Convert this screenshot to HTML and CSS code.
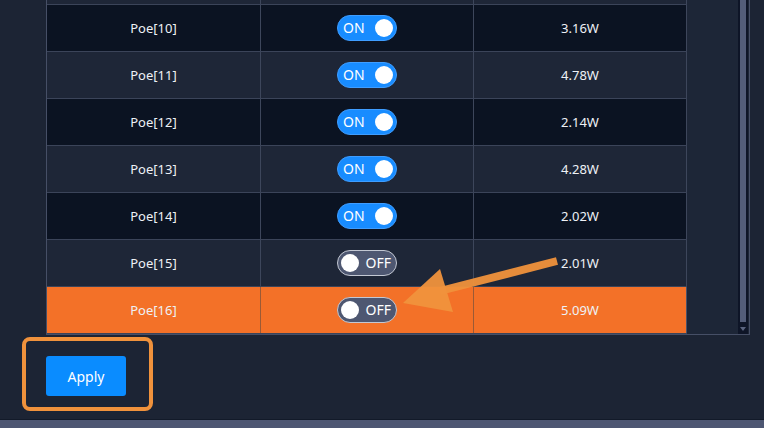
FILE: index.html
```html
<!DOCTYPE html>
<html>
<head>
<meta charset="utf-8">
<link rel="stylesheet" href="styles.css">
</head>
<body>
<div class="page">
  <div class="listbox">
    <div class="table">
      <div class="row light"><div class="cell">Poe[9]</div><div class="cell"><span class="tog on"><span class="lbl">ON</span><span class="knob"></span></span></div><div class="cell">3.10W</div></div>
      <div class="row dark"><div class="cell">Poe[10]</div><div class="cell"><span class="tog on"><span class="lbl">ON</span><span class="knob"></span></span></div><div class="cell">3.16W</div></div>
      <div class="row light"><div class="cell">Poe[11]</div><div class="cell"><span class="tog on"><span class="lbl">ON</span><span class="knob"></span></span></div><div class="cell">4.78W</div></div>
      <div class="row dark"><div class="cell">Poe[12]</div><div class="cell"><span class="tog on"><span class="lbl">ON</span><span class="knob"></span></span></div><div class="cell">2.14W</div></div>
      <div class="row light"><div class="cell">Poe[13]</div><div class="cell"><span class="tog on"><span class="lbl">ON</span><span class="knob"></span></span></div><div class="cell">4.28W</div></div>
      <div class="row dark"><div class="cell">Poe[14]</div><div class="cell"><span class="tog on"><span class="lbl">ON</span><span class="knob"></span></span></div><div class="cell">2.02W</div></div>
      <div class="row light"><div class="cell">Poe[15]</div><div class="cell"><span class="tog off"><span class="knob"></span><span class="lbl">OFF</span></span></div><div class="cell">2.01W</div></div>
      <div class="row hl"><div class="cell">Poe[16]</div><div class="cell"><span class="tog off"><span class="knob"></span><span class="lbl">OFF</span></span></div><div class="cell">5.09W</div></div>
    </div>
    <div class="spacer"></div>
    <div class="scrollbar"><div class="thumb"></div><div class="arrow"></div></div>
  </div>
  <div class="footer">
    <button class="apply">Apply</button>
    <div class="highlight"></div>
  </div>
  <div class="bottombar"></div>
  <svg class="annot" width="764" height="428" viewBox="0 0 764 428">
    <line x1="557" y1="261" x2="440" y2="291" stroke="#f0923c" stroke-width="8" stroke-linecap="butt" opacity="0.95"/>
    <polygon points="403,303 440,269 453,312" fill="#f0923c" opacity="0.95"/>
  </svg>
</div>
</body>
</html>
```
FILE: styles.css
```css
html, body {
  margin: 0;
  padding: 0;
  background: #1c2434;
  overflow: hidden;
}
.page {
  position: relative;
  width: 764px;
  height: 428px;
  overflow: hidden;
  font-family: "Noto Sans", "Open Sans", sans-serif;
  font-size: 13px;
  color: #eef1f6;
}
.listbox {
  margin-top: -43px;
  margin-left: 46px;
  width: 702px;
  border: 1px solid #464f66;
  display: flex;
  background: #1d2637;
}
.table {
  width: 640px;
  display: flex;
  flex-direction: column;
}
.row {
  display: grid;
  grid-template-columns: 214px 213px 213px;
  height: 46px;
  border-bottom: 1px solid #3b4459;
}
.row.dark { background: #0b1322; }
.row.light { background: #1e2637; }
.row.hl { background: #f37128; }
.cell {
  display: flex;
  align-items: center;
  justify-content: center;
  border-right: 1px solid #3d465b;
}
.row.hl .cell { border-right-color: #9a5a36; }
.row.hl .cell:last-child { border-right-color: #4a5168; }
.tog {
  box-sizing: border-box;
  width: 60px;
  height: 26px;
  border-radius: 13px;
  display: flex;
  align-items: center;
  padding: 0 3px;
  font-size: 14px;
}
.tog.on {
  background: #188cff;
  border: 1px solid #3f9dff;
  justify-content: space-between;
  padding-left: 5px;
}
.tog.off {
  background: #4e5771;
  border: 1px solid #c3c8d3;
  justify-content: space-between;
  padding-right: 5px;
}
.knob {
  width: 18px;
  height: 18px;
  border-radius: 50%;
  background: #ffffff;
}
.lbl { line-height: 1; color: #ffffff; }
.spacer { flex: 1; }
.scrollbar {
  width: 10px;
  margin-right: 1px;
  background: #0e1527;
  position: relative;
  display: flex;
  flex-direction: column;
  align-items: center;
}
.thumb {
  width: 6px;
  flex: 1;
  margin-bottom: 12px;
  background: #535d79;
}
.arrow {
  position: absolute;
  bottom: 3px;
  left: 2px;
  width: 0;
  height: 0;
  border-left: 3px solid transparent;
  border-right: 3px solid transparent;
  border-top: 4px solid #5a647f;
}
.footer {
  position: relative;
  height: 84px;
  padding: 21px 0 0 46px;
  box-sizing: border-box;
}
.apply {
  width: 80px;
  height: 40px;
  border: none;
  border-radius: 3px;
  background: #0a8cff;
  color: #ffffff;
  font-family: "Noto Sans", "Open Sans", sans-serif;
  font-size: 14px;
  padding: 0;
}
.highlight {
  position: absolute;
  left: 22px;
  top: 2px;
  width: 131px;
  height: 74px;
  box-sizing: border-box;
  border: 4px solid #f0923c;
  border-radius: 8px;
}
.bottombar {
  height: 10px;
  border-top: 1px solid #121a29;
  background: #4d5672;
}
.annot {
  position: absolute;
  left: 0;
  top: 0;
  pointer-events: none;
}
```
